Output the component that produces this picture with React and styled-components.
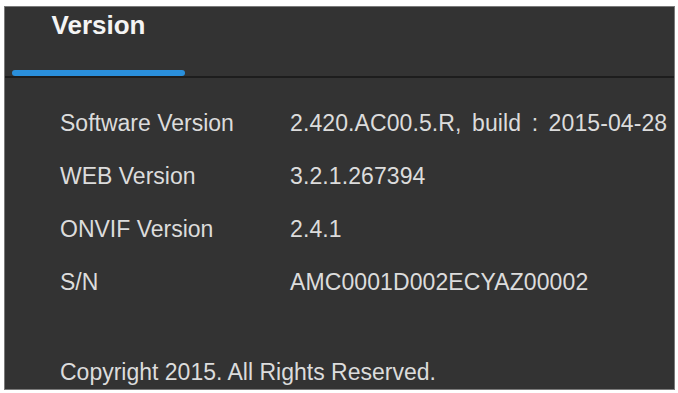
import React from "react";
import styled, { createGlobalStyle } from "styled-components";

const GlobalStyle = createGlobalStyle`
  html, body {
    margin: 0;
    padding: 0;
    background: #ffffff;
  }
  body {
    font-family: "Liberation Sans", Arial, sans-serif;
  }
`;

const Panel = styled.section`
  box-sizing: border-box;
  margin: 6px 0 0 4px;
  width: 671px;
  height: 384px;
  background: #333333;
  border: 1px solid #7a7a7a;
  display: flex;
  flex-direction: column;
  overflow: hidden;
`;

const Header = styled.header`
  height: 69px;
  flex-shrink: 0;
  display: flex;
  align-items: stretch;
  padding-left: 7px;
  border-bottom: 2px solid #1d1d1d;
`;

const Tab = styled.div`
  width: 173px;
  display: flex;
  flex-direction: column;
  align-items: center;
  justify-content: space-between;
  padding-top: 3px;
`;

const TabTitle = styled.span`
  font-size: 26px;
  font-weight: 700;
  line-height: 30px;
  color: #f4f4f4;
`;

const TabUnderline = styled.span`
  align-self: stretch;
  height: 6px;
  border-radius: 3px;
  background: ${(p) => (p.$active ? "#2a8fdb" : "transparent")};
`;

const Body = styled.div`
  padding: 19px 0 0 55px;
  display: flex;
  flex-direction: column;
  flex: 1;
`;

const InfoGrid = styled.dl`
  margin: 0;
  display: grid;
  grid-template-columns: 230px 1fr;
  font-size: 23px;
  line-height: 53px;
  color: #dcdcdc;
`;

const Label = styled.dt`
  margin: 0;
  white-space: nowrap;
`;

const Value = styled.dd`
  margin: 0;
  white-space: nowrap;
  word-spacing: 4px;
  letter-spacing: 0.1px;
`;

const Copyright = styled.p`
  margin: 48px 0 0;
  font-size: 23px;
  line-height: 30px;
  color: #dcdcdc;
  white-space: nowrap;
`;

const rows = [
  ["Software Version", "2.420.AC00.5.R, build : 2015-04-28"],
  ["WEB Version", "3.2.1.267394"],
  ["ONVIF Version", "2.4.1"],
  ["S/N", "AMC0001D002ECYAZ00002"],
];

export default function App() {
  return (
    <>
      <GlobalStyle />
      <Panel>
        <Header>
          <Tab>
            <TabTitle>Version</TabTitle>
            <TabUnderline $active />
          </Tab>
        </Header>
        <Body>
          <InfoGrid>
            {rows.map(([label, value]) => (
              <React.Fragment key={label}>
                <Label>{label}</Label>
                <Value>{value}</Value>
              </React.Fragment>
            ))}
          </InfoGrid>
          <Copyright>Copyright 2015. All Rights Reserved.</Copyright>
        </Body>
      </Panel>
    </>
  );
}
